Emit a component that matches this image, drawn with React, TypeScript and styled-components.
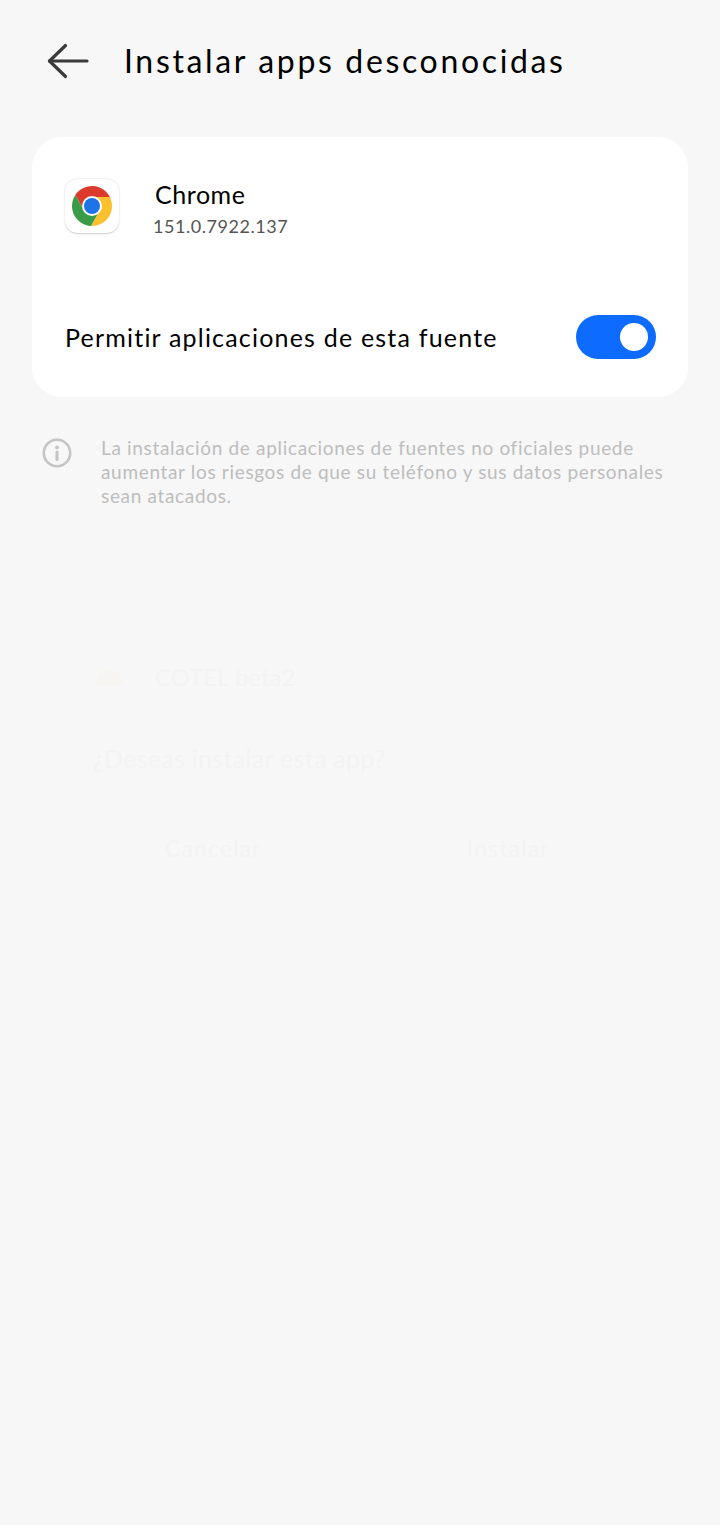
import React from "react";
import styled, { createGlobalStyle } from "styled-components";

const Global = createGlobalStyle`
  html, body { margin: 0; padding: 0; background: #f7f7f7; }
  body { font-family: "Lato", "Noto Sans", sans-serif; }
`;

const Page = styled.div`
  width: 720px;
  height: 1525px;
  background: #f7f7f7;
  overflow: hidden;
  display: flex;
  flex-direction: column;
`;

const Header = styled.header`
  display: flex;
  align-items: center;
  height: 124px;
  padding: 0 0 2px 47px;
  box-sizing: border-box;
  gap: 35px;
`;

const Title = styled.h1`
  margin: 0;
  font-size: 32px;
  font-weight: 400;
  letter-spacing: 2.65px;
  color: #000;
  line-height: 40px;
`;

const Card = styled.section`
  margin: 13px 32px 0;
  height: 260px;
  box-sizing: border-box;
  background: #fff;
  border-radius: 30px;
  padding: 42px 32px 38px 33px;
  display: flex;
  flex-direction: column;
  justify-content: space-between;
`;

const AppRow = styled.div`
  display: flex;
  align-items: flex-start;
  gap: 36px;
`;

const AppTile = styled.div`
  width: 54px;
  height: 54px;
  border-radius: 13px;
  background: #fff;
  box-shadow: 0 0.5px 2px rgba(0, 0, 0, 0.2);
  display: flex;
  align-items: center;
  justify-content: center;
`;

const AppInfo = styled.div`
  display: flex;
  flex-direction: column;
  gap: 5px;
`;

const AppName = styled.div`
  font-size: 25px;
  line-height: 30px;
  letter-spacing: 0.55px;
  color: #000;
`;

const AppVersion = styled.div`
  margin-left: -2px;
  font-size: 18px;
  line-height: 24px;
  letter-spacing: 0.55px;
  color: #555;
`;

const ToggleRow = styled.div`
  display: flex;
  align-items: center;
  justify-content: space-between;
`;

const ToggleLabel = styled.div`
  font-size: 25px;
  line-height: 44px;
  letter-spacing: 1.2px;
  color: #000;
`;

const Switch = styled.div`
  width: 80px;
  height: 44px;
  border-radius: 22px;
  background: #0d6bff;
  display: flex;
  align-items: center;
  justify-content: flex-end;
  padding-right: 8px;
  box-sizing: border-box;
`;

const Knob = styled.div`
  width: 28px;
  height: 28px;
  border-radius: 50%;
  background: #fff;
`;

const Notice = styled.div`
  display: flex;
  align-items: flex-start;
  margin: 39px 32px 0 42px;
  gap: 29px;
`;

const NoticeIcon = styled.svg`
  width: 30px;
  height: 30px;
  flex: none;
  margin-top: 2px;
`;

const NoticeText = styled.p`
  margin: 0;
  font-size: 19px;
  line-height: 24px;
  letter-spacing: 0.67px;
  color: #bdbdbd;
  white-space: pre;
`;

const GhostDialog = styled.div`
  padding: 154px 0 0 94px;
  display: flex;
  flex-direction: column;
  color: #f3f3f4;
`;

const GhostApp = styled.div`
  display: flex;
  align-items: center;
  gap: 31px;
  font-size: 24px;
  line-height: 30px;
  letter-spacing: 0px;
`;

const GhostIcon = styled.svg`
  width: 30px;
  height: 18px;
  flex: none;
`;

const GhostQuestion = styled.div`
  margin-top: 51px;
  margin-left: -1px;
  font-size: 25px;
  line-height: 30px;
  letter-spacing: 0.3px;
`;

const GhostActions = styled.div`
  display: flex;
  margin-top: 60px;
  padding-left: 71px;
  font-size: 23px;
  line-height: 30px;
  letter-spacing: 1.1px;
`;

const GhostAction = styled.div`
  flex: none;
  width: 302px;
`;

const Wedge = ({ fill, rot }: { fill: string; rot: number }) => (
  <path
    d="M0 0L0 -9L17.86 -9A20 20 0 0 0 -16.72 -10.97L-7.79 4.5Z"
    fill={fill}
    transform={`rotate(${rot})`}
  />
);

const ChromeLogo = () => (
  <svg width="40" height="40" viewBox="-20 -20 40 40">
    <Wedge fill="#db3a2d" rot={0} />
    <Wedge fill="#fbc02d" rot={120} />
    <Wedge fill="#3a9b49" rot={240} />
    <circle r="10" fill="#fff" />
    <circle r="8" fill="#1f73e8" />
  </svg>
);

export default function App() {
  return (
    <Page>
      <Global />
      <Header>
        <svg width="42" height="36" viewBox="0 0 42 36" fill="none" stroke="#3a3a3a" strokeWidth="3.2" strokeLinecap="round" strokeLinejoin="round">
          <path d="M40 18H2.5" />
          <path d="M18.5 2.5L2.5 18L18.5 33.5" />
        </svg>
        <Title>Instalar apps desconocidas</Title>
      </Header>
      <Card>
        <AppRow>
          <AppTile>
            <ChromeLogo />
          </AppTile>
          <AppInfo>
            <AppName>Chrome</AppName>
            <AppVersion>151.0.7922.137</AppVersion>
          </AppInfo>
        </AppRow>
        <ToggleRow>
          <ToggleLabel>Permitir aplicaciones de esta fuente</ToggleLabel>
          <Switch>
            <Knob />
          </Switch>
        </ToggleRow>
      </Card>
      <Notice>
        <NoticeIcon viewBox="0 0 30 30" fill="none">
          <circle cx="15" cy="15" r="13.2" stroke="#c4c4c4" strokeWidth="2.6" />
          <circle cx="15" cy="9.4" r="1.9" fill="#c4c4c4" />
          <path d="M15 14V21.5" stroke="#c4c4c4" strokeWidth="3" strokeLinecap="round" />
        </NoticeIcon>
        <NoticeText>{"La instalación de aplicaciones de fuentes no oficiales puede\naumentar los riesgos de que su teléfono y sus datos personales\nsean atacados."}</NoticeText>
      </Notice>
      <GhostDialog>
        <GhostApp>
          <GhostIcon viewBox="0 0 30 18">
            <path d="M1 17C2 7 8 1 15 1C22 1 28 7 29 17Z" fill="#f7f5f2" />
          </GhostIcon>
          COTEL beta2
        </GhostApp>
        <GhostQuestion>¿Deseas instalar esta app?</GhostQuestion>
        <GhostActions>
          <GhostAction>Cancelar</GhostAction>
          <GhostAction>Instalar</GhostAction>
        </GhostActions>
      </GhostDialog>
    </Page>
  );
}
